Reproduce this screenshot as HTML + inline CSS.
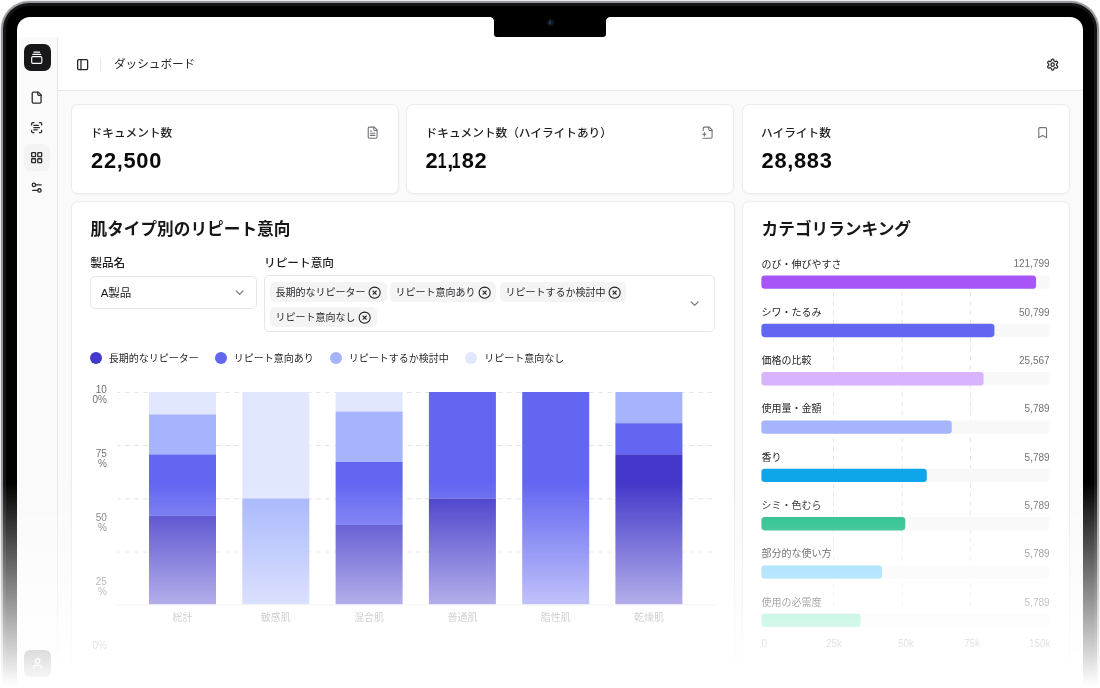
<!DOCTYPE html>
<html lang="ja">
<head>
<meta charset="utf-8">
<title>ダッシュボード</title>
<style>
*{box-sizing:border-box;margin:0;padding:0}
html,body{width:1100px;height:688px;overflow:hidden;background:#fff}
body{position:relative;font-family:"Liberation Sans","Noto Sans CJK JP",sans-serif;color:#171717;-webkit-font-smoothing:antialiased}
.abs{position:absolute}
svg.ic{position:absolute;fill:none;stroke:currentColor;stroke-width:2;stroke-linecap:round;stroke-linejoin:round}
/* laptop */
#edge{position:absolute;left:0;top:0;width:1100px;height:900px;border-radius:29px;background:#ececee}
#metal{position:absolute;left:1px;top:1px;width:1098px;height:900px;border-radius:28px;background:#98989c}
#bezel2{position:absolute;left:3px;top:3px;width:1094px;height:900px;border-radius:26px;background:#161616}
#bezel{position:absolute;left:6px;top:6px;width:1088px;height:900px;border-radius:23px;background:#000}
#screen{will-change:transform;position:absolute;left:17px;top:17px;width:1066px;height:800px;border-radius:13px;background:#fff;overflow:hidden}
#notch{position:absolute;left:476.8px;top:0;width:112.6px;height:19.5px;background:#000;border-radius:0 0 3px 3px}
#notch:before,#notch:after{content:"";position:absolute;top:0;width:2.6px;height:2.6px}
#notch:before{left:-2.6px;background:radial-gradient(circle at 0 100%,rgba(0,0,0,0) 2.3px,#000 2.9px)}
#notch:after{right:-2.6px;background:radial-gradient(circle at 100% 100%,rgba(0,0,0,0) 2.3px,#000 2.9px)}
#cam{position:absolute;left:52.8px;top:2px;width:7px;height:7px;border-radius:50%;background:radial-gradient(circle,#1a1a1c 0,#151517 55%,#000 100%)}
#cam i{position:absolute;left:2.3px;top:2.3px;width:2.4px;height:2.4px;border-radius:50%;background:#173f82}
#sidebar{position:absolute;left:0;top:20px;width:41px;height:780px;background:#fafafa;border-right:1px solid #e8e8eb}
#header{position:absolute;left:41px;top:20px;width:1025px;height:53.5px;background:#fff;border-bottom:1px solid #e8e8eb}
#main{position:absolute;left:41px;top:73.5px;width:1025px;height:730px;background:#fafafa}
.card{position:absolute;background:#fff;border:1px solid #ebebed;border-radius:7px;box-shadow:0 1px 2px rgba(0,0,0,.03)}
.klabel{font-weight:500;position:absolute;font-size:11.67px;line-height:14px;color:#1c1c1f;white-space:nowrap}
.kval{position:absolute;font-size:21.8px;line-height:24px;font-weight:700;color:#0a0a0a;letter-spacing:.7px;white-space:nowrap}
.kval span{display:inline-block}.kval .one{transform:scaleX(.72)}
.title{position:absolute;font-size:16.67px;line-height:22px;font-weight:700;color:#171717;white-space:nowrap}
.flabel{font-weight:500;position:absolute;font-size:11.67px;line-height:14px;color:#1c1c1f;white-space:nowrap}
.tag{position:absolute;height:20px;border-radius:5px;background:#f4f4f5;font-size:10px;line-height:21px;color:#27272a;padding-left:5.2px;white-space:nowrap}
.lg{margin-top:.6px;margin-left:-.8px;position:absolute;font-size:10px;line-height:14px;color:#27272a;white-space:nowrap}
.dot{margin:-.3px 0 0 -.5px;position:absolute;width:12.2px;height:12.2px;border-radius:50%}
.ytick{margin-top:1.3px;position:absolute;width:20px;font-size:10px;line-height:10.2px;color:#737373;text-align:right;word-break:break-all}
.xtick{margin-top:1.5px;position:absolute;width:60px;text-align:center;font-size:10px;line-height:14px;color:#737373;white-space:nowrap}
.rl{margin-top:1.2px;position:absolute;left:18.4px;font-size:10px;line-height:14px;color:#262626;white-space:nowrap}
.rv{margin-top:1px;position:absolute;right:19.4px;font-size:10px;line-height:14px;color:#71717a;white-space:nowrap;text-align:right}
.rx{position:absolute;top:434.9px;font-size:10px;line-height:14px;color:#737373;white-space:nowrap}
#fade{position:absolute;left:0;top:482px;width:1100px;height:206px;background:linear-gradient(to bottom,rgba(255,255,255,0),rgba(255,255,255,1) 204px)}
</style>
</head>
<body>
<div id="edge"></div><div id="metal"></div><div id="bezel2"></div><div id="bezel"></div>
<div id="screen">
  <div id="sidebar">
    <div class="abs" style="left:7px;top:7px;width:26.5px;height:26.5px;border-radius:7px;background:#18181b;color:#fff">
      <svg class="ic" style="left:5.9px;top:7px" width="13.5" height="13.5" viewBox="0 0 24 24"><path d="M7 2h10"/><path d="M5 6h14"/><rect width="18" height="12" x="3" y="10" rx="2"/></svg>
    </div>
    <div class="abs" style="left:7px;top:107px;width:26px;height:26.5px;border-radius:6px;background:#f3f3f4"></div>
    <div style="color:#2a2a2e;stroke-width:2.35">
    <svg class="ic" style="left:13.35px;top:53.5px;stroke-width:inherit" width="13.3" height="13.3" viewBox="0 0 24 24"><path d="M15 2H6a2 2 0 0 0-2 2v16a2 2 0 0 0 2 2h12a2 2 0 0 0 2-2V7Z"/><path d="M14 2v4a2 2 0 0 0 2 2h4"/></svg>
    <svg class="ic" style="left:13.35px;top:83.5px;stroke-width:inherit" width="13.3" height="13.3" viewBox="0 0 24 24"><path d="M3 7V5a2 2 0 0 1 2-2h2"/><path d="M17 3h2a2 2 0 0 1 2 2v2"/><path d="M21 17v2a2 2 0 0 1-2 2h-2"/><path d="M7 21H5a2 2 0 0 1-2-2v-2"/><path d="M7 8h8"/><path d="M7 12h10"/><path d="M7 16h6"/></svg>
    <svg class="ic" style="left:13.35px;top:113.5px;stroke-width:inherit" width="13.3" height="13.3" viewBox="0 0 24 24"><rect width="7" height="7" x="3" y="3" rx="1"/><rect width="7" height="7" x="14" y="3" rx="1"/><rect width="7" height="7" x="14" y="14" rx="1"/><rect width="7" height="7" x="3" y="14" rx="1"/></svg>
    <svg class="ic" style="left:13.35px;top:143.5px;stroke-width:inherit" width="13.3" height="13.3" viewBox="0 0 24 24"><path d="M20 7h-9"/><path d="M14 17H5"/><circle cx="17" cy="17" r="3"/><circle cx="7" cy="7" r="3"/></svg>
    </div>
    <div class="abs" style="left:7px;top:613px;width:26.5px;height:26.5px;border-radius:6px;background:#3a3a41;color:#fff">
      <svg class="ic" style="left:6.6px;top:6.6px" width="13.3" height="13.3" viewBox="0 0 24 24"><path d="M19 21v-2a4 4 0 0 0-4-4H9a4 4 0 0 0-4 4v2"/><circle cx="12" cy="7" r="4"/></svg>
    </div>
  </div>
  <div id="header">
    <svg class="ic" style="left:17.5px;top:20.9px;color:#27272a;stroke-width:2.3" width="13.3" height="13.3" viewBox="0 0 24 24"><rect width="18" height="18" x="3" y="3" rx="2"/><path d="M9 3v18"/></svg>
    <div class="abs" style="left:42px;top:20.5px;width:1px;height:13px;background:#e4e4e7"></div>
    <div class="abs" style="left:56px;top:19.4px;font-size:11.6px;line-height:16px;color:#27272a;white-space:nowrap">ダッシュボード</div>
    <svg class="ic" style="left:988px;top:20.6px;color:#27272a;stroke-width:2.3" width="13.3" height="13.3" viewBox="0 0 24 24"><path d="M12.22 2h-.44a2 2 0 0 0-2 2v.18a2 2 0 0 1-1 1.73l-.43.25a2 2 0 0 1-2 0l-.15-.08a2 2 0 0 0-2.73.73l-.22.38a2 2 0 0 0 .73 2.73l.15.1a2 2 0 0 1 1 1.72v.51a2 2 0 0 1-1 1.74l-.15.09a2 2 0 0 0-.73 2.73l.22.38a2 2 0 0 0 2.73.73l.15-.08a2 2 0 0 1 2 0l.43.25a2 2 0 0 1 1 1.73V20a2 2 0 0 0 2 2h.44a2 2 0 0 0 2-2v-.18a2 2 0 0 1 1-1.73l.43-.25a2 2 0 0 1 2 0l.15.08a2 2 0 0 0 2.73-.73l.22-.39a2 2 0 0 0-.73-2.73l-.15-.08a2 2 0 0 1-1-1.74v-.5a2 2 0 0 1 1-1.74l.15-.09a2 2 0 0 0 .73-2.73l-.22-.38a2 2 0 0 0-2.73-.73l-.15.08a2 2 0 0 1-2 0l-.43-.25a2 2 0 0 1-1-1.73V4a2 2 0 0 0-2-2z"/><circle cx="12" cy="12" r="3"/></svg>
  </div>
  <div id="main">
    <!-- KPI cards : main origin = (58,90.5) page -->
    <div class="card" style="left:13px;top:13.5px;width:328px;height:90px">
      <div class="klabel" style="left:18.6px;top:20.5px">ドキュメント数</div>
      <div class="kval" style="left:19.1px;top:44px">22,500</div>
      <svg class="ic" style="left:293.6px;top:20.5px;color:#71717a" width="13.3" height="13.3" viewBox="0 0 24 24"><path d="M15 2H6a2 2 0 0 0-2 2v16a2 2 0 0 0 2 2h12a2 2 0 0 0 2-2V7Z"/><path d="M14 2v4a2 2 0 0 0 2 2h4"/><path d="M10 9H8"/><path d="M16 13H8"/><path d="M16 17H8"/></svg>
    </div>
    <div class="card" style="left:348px;top:13.5px;width:328px;height:90px">
      <div class="klabel" style="left:18.6px;top:20.5px">ドキュメント数（ハイライトあり）</div>
      <div class="kval" style="left:18.5px;top:44px;letter-spacing:0"><span>2</span><span class="one" style="margin-left:-1.71px">1</span><span style="margin-left:-.73px">,</span><span class="one" style="margin-left:-2.95px">1</span><span style="margin-left:-.73px">8</span><span style="margin-left:.48px">2</span></div>
      <svg class="ic" style="left:293.6px;top:20.5px;color:#71717a" width="13.3" height="13.3" viewBox="0 0 24 24"><path d="M4 22h14a2 2 0 0 0 2-2V7l-5-5H6a2 2 0 0 0-2 2v4"/><path d="M14 2v4a2 2 0 0 0 2 2h4"/><path d="M3 15h6"/><path d="M6 12v6"/></svg>
    </div>
    <div class="card" style="left:683.5px;top:13.5px;width:328.5px;height:90px">
      <div class="klabel" style="left:18.6px;top:20.5px">ハイライト数</div>
      <div class="kval" style="left:19.1px;top:44px">28,883</div>
      <svg class="ic" style="left:293.6px;top:20.5px;color:#71717a" width="13.3" height="13.3" viewBox="0 0 24 24"><path d="m19 21-7-4-7 4V5a2 2 0 0 1 2-2h10a2 2 0 0 1 2 2v16z"/></svg>
    </div>
    <!-- chart panel -->
    <div class="card" id="cp" style="left:13px;top:110.5px;width:664px;height:469px">
      <div class="title" style="left:18.5px;top:17.2px">肌タイプ別のリピート意向</div>
      <div class="flabel" style="left:18.3px;top:54.4px">製品名</div>
      <div class="flabel" style="left:192px;top:54.4px">リピート意向</div>
      <div class="abs" style="left:18px;top:74px;width:166.5px;height:32.5px;border:1px solid #e6e6e9;border-radius:5px;background:#fff">
        <div class="abs" style="left:9.7px;top:8.5px;font-size:11.5px;line-height:15px;color:#171717;white-space:nowrap">A製品</div>
        <svg class="ic" style="left:142.3px;top:9.1px;color:#7e7e85;stroke-width:2.2" width="13.3" height="13.3" viewBox="0 0 24 24"><path d="m6 9 6 6 6-6"/></svg>
      </div>
      <div class="abs" style="left:191.5px;top:73px;width:451px;height:57px;border:1px solid #e6e6e9;border-radius:5px;background:#fff">
        <div class="tag" style="left:5.8px;top:5.7px;width:116.3px">長期的なリピーター<svg class="ic" style="right:5.2px;top:3.85px;color:#18181b;stroke-width:1.9" width="13.3" height="13.3" viewBox="0 0 24 24"><circle cx="12" cy="12" r="10"/><path d="m15 9-6 6"/><path d="m9 9 6 6"/></svg></div>
        <div class="tag" style="left:125.8px;top:5.7px;width:106px">リピート意向あり<svg class="ic" style="right:5.2px;top:3.85px;color:#18181b;stroke-width:1.9" width="13.3" height="13.3" viewBox="0 0 24 24"><circle cx="12" cy="12" r="10"/><path d="m15 9-6 6"/><path d="m9 9 6 6"/></svg></div>
        <div class="tag" style="left:235.8px;top:5.7px;width:126.2px">リピートするか検討中<svg class="ic" style="right:5.2px;top:3.85px;color:#18181b;stroke-width:1.9" width="13.3" height="13.3" viewBox="0 0 24 24"><circle cx="12" cy="12" r="10"/><path d="m15 9-6 6"/><path d="m9 9 6 6"/></svg></div>
        <div class="tag" style="left:5.8px;top:30.8px;width:106.3px">リピート意向なし<svg class="ic" style="right:5.2px;top:3.85px;color:#18181b;stroke-width:1.9" width="13.3" height="13.3" viewBox="0 0 24 24"><circle cx="12" cy="12" r="10"/><path d="m15 9-6 6"/><path d="m9 9 6 6"/></svg></div>
        <svg class="ic" style="left:423.8px;top:21.2px;color:#7e7e85;stroke-width:2.2" width="13.3" height="13.3" viewBox="0 0 24 24"><path d="m6 9 6 6 6-6"/></svg>
      </div>
      <svg class="abs" style="left:0;top:0" width="661" height="467" viewBox="72 202 661 467">
      <defs><clipPath id="gc"><rect x="117.2" y="380" width="597.8" height="240"/></clipPath></defs>
      <g clip-path="url(#gc)" stroke="#e2e2e5" stroke-width="1" stroke-dasharray="4.55 4.55" fill="none">
      <path d="M115.9 392.4H716"/>
      <path d="M115.9 445.6H716"/>
      <path d="M115.9 498.8H716"/>
      <path d="M115.9 552H716"/>
      </g>
      <path d="M117.2 604.9H715" stroke="#e4e4e7" stroke-width="1" fill="none"/>
      <rect x="149" y="392" width="67" height="22.5" fill="#e0e7ff"/>
      <rect x="149" y="414.5" width="67" height="39.9" fill="#a5b4fc"/>
      <rect x="149" y="454.4" width="67" height="61.5" fill="#6366f1"/>
      <rect x="149" y="515.9" width="67" height="88.3" fill="#4338ca"/>
      <rect x="242.3" y="392" width="67" height="106.5" fill="#e0e7ff"/>
      <rect x="242.3" y="498.5" width="67" height="105.7" fill="#a5b4fc"/>
      <rect x="335.6" y="392" width="67" height="19.6" fill="#e0e7ff"/>
      <rect x="335.6" y="411.6" width="67" height="50.4" fill="#a5b4fc"/>
      <rect x="335.6" y="462" width="67" height="63" fill="#6366f1"/>
      <rect x="335.6" y="525" width="67" height="79.2" fill="#4338ca"/>
      <rect x="428.9" y="392" width="67" height="106.5" fill="#6366f1"/>
      <rect x="428.9" y="498.5" width="67" height="105.7" fill="#4338ca"/>
      <rect x="522.2" y="392" width="67" height="212.2" fill="#6366f1"/>
      <rect x="615.4" y="392" width="67" height="31.2" fill="#a5b4fc"/>
      <rect x="615.4" y="423.2" width="67" height="31.1" fill="#6366f1"/>
      <rect x="615.4" y="454.3" width="67" height="149.9" fill="#4338ca"/>
      </svg>
      <div class="dot" style="left:18.5px;top:150.5px;background:#4338ca"></div><div class="lg" style="left:37.6px;top:149.0px">長期的なリピーター</div>
      <div class="dot" style="left:143.7px;top:150.5px;background:#6366f1"></div><div class="lg" style="left:162.5px;top:149.0px">リピート意向あり</div>
      <div class="dot" style="left:258.7px;top:150.5px;background:#a5b4fc"></div><div class="lg" style="left:277.6px;top:149.0px">リピートするか検討中</div>
      <div class="dot" style="left:393.6px;top:150.5px;background:#e0e7ff"></div><div class="lg" style="left:413px;top:149.0px">リピート意向なし</div>
      <div class="ytick" style="left:14.9px;top:181.6px">10<br>0%</div>
      <div class="ytick" style="left:14.9px;top:245.6px">75<br>%</div>
      <div class="ytick" style="left:14.9px;top:309.6px">50<br>%</div>
      <div class="ytick" style="left:14.9px;top:373.6px">25<br>%</div>
      <div class="ytick" style="left:14.9px;top:437.6px">0%</div>
      <div class="xtick" style="left:80.5px;top:407.1px">総計</div>
      <div class="xtick" style="left:173.8px;top:407.1px">敏感肌</div>
      <div class="xtick" style="left:267.1px;top:407.1px">混合肌</div>
      <div class="xtick" style="left:360.4px;top:407.1px">普通肌</div>
      <div class="xtick" style="left:453.7px;top:407.1px">脂性肌</div>
      <div class="xtick" style="left:546.9px;top:407.1px">乾燥肌</div>
      
    </div>
    <!-- ranking panel -->
    <div class="card" id="rp" style="left:684px;top:110.5px;width:328px;height:469px">
      <div class="title" style="left:18.6px;top:17.2px">カテゴリランキング</div>
      <svg class="abs" style="left:0;top:0" width="325.5" height="465" viewBox="743 202 325.5 465"><g stroke="#e6e6e9" stroke-width="1" stroke-dasharray="4.55 4.55" fill="none"><path d="M833.5 292.2V610"/><path d="M902.3 292.2V610"/><path d="M970.5 292.2V610"/></g><rect x="761.4" y="275.45" width="288.1" height="13.35" rx="3.33" fill="#f8f8f9"/><rect x="761.4" y="275.45" width="274.67" height="13.35" rx="3.33" fill="#a855f7"/><rect x="761.4" y="323.78" width="288.1" height="13.35" rx="3.33" fill="#f8f8f9"/><rect x="761.4" y="323.78" width="233.0" height="13.35" rx="3.33" fill="#6366f1"/><rect x="761.4" y="372.11" width="288.1" height="13.35" rx="3.33" fill="#f8f8f9"/><rect x="761.4" y="372.11" width="222.2" height="13.35" rx="3.33" fill="#d8b4fe"/><rect x="761.4" y="420.44" width="288.1" height="13.35" rx="3.33" fill="#f8f8f9"/><rect x="761.4" y="420.44" width="190.3" height="13.35" rx="3.33" fill="#a5b4fc"/><rect x="761.4" y="468.77" width="288.1" height="13.35" rx="3.33" fill="#f8f8f9"/><rect x="761.4" y="468.77" width="165.4" height="13.35" rx="3.33" fill="#0ea5e9"/><rect x="761.4" y="517.1" width="288.1" height="13.35" rx="3.33" fill="#f8f8f9"/><rect x="761.4" y="517.1" width="143.9" height="13.35" rx="3.33" fill="#10b981"/><rect x="761.4" y="565.43" width="288.1" height="13.35" rx="3.33" fill="#f8f8f9"/><rect x="761.4" y="565.43" width="120.6" height="13.35" rx="3.33" fill="#7dd3fc"/><rect x="761.4" y="613.76" width="288.1" height="13.35" rx="3.33" fill="#f8f8f9"/><rect x="761.4" y="613.76" width="99.1" height="13.35" rx="3.33" fill="#6ee7b7"/></svg>
      <div class="rl" style="top:54.4px">のび・伸びやすさ</div><div class="rv" style="top:54.4px">121,799</div>
      <div class="rl" style="top:102.7px">シワ・たるみ</div><div class="rv" style="top:102.7px">50,799</div>
      <div class="rl" style="top:151.0px">価格の比較</div><div class="rv" style="top:151.0px">25,567</div>
      <div class="rl" style="top:199.3px">使用量・金額</div><div class="rv" style="top:199.3px">5,789</div>
      <div class="rl" style="top:247.6px">香り</div><div class="rv" style="top:247.6px">5,789</div>
      <div class="rl" style="top:295.9px">シミ・色むら</div><div class="rv" style="top:295.9px">5,789</div>
      <div class="rl" style="top:344.2px">部分的な使い方</div><div class="rv" style="top:344.2px">5,789</div>
      <div class="rl" style="top:392.5px">使用の必需度</div><div class="rv" style="top:392.5px">5,789</div>
      <div class="rx" style="left:18.6px">0</div><div class="rx" style="left:71px;width:40px;text-align:center">25k</div><div class="rx" style="left:143px;width:40px;text-align:center">50k</div><div class="rx" style="left:209px;width:40px;text-align:center">75k</div><div class="rx" style="left:267.6px;width:40px;text-align:right">150k</div>
    </div>
  </div>
  <div id="notch"><div id="cam"><i></i></div></div>
</div>
<div id="fade"></div>
</body>
</html>
